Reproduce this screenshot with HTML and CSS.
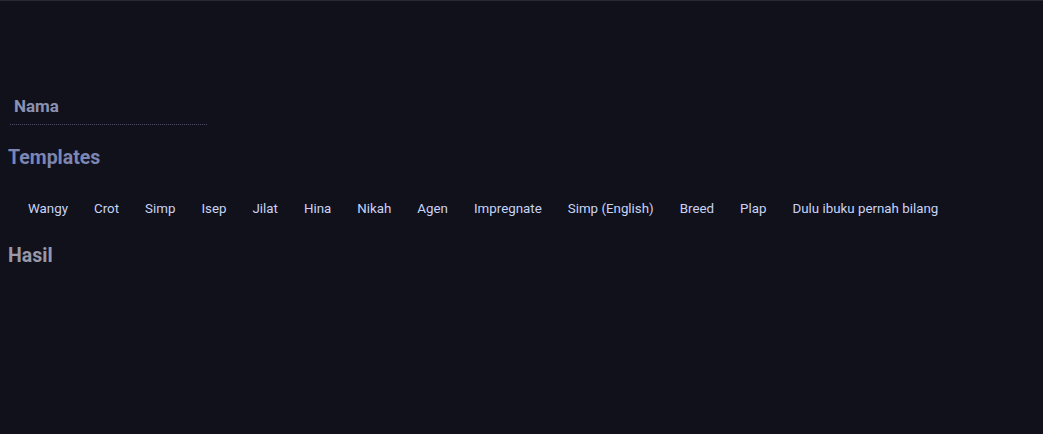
FILE: index.html
```html
<!DOCTYPE html>
<html>
<head>
<meta charset="utf-8">
<link rel="stylesheet" href="styles.css">
</head>
<body>
<main class="page">
  <div class="field">
    <input class="name-input" type="text" placeholder="Nama">
  </div>
  <h2 class="heading heading-templates">Templates</h2>
  <div class="templates">
    <button class="tpl">Wangy</button>
    <button class="tpl">Crot</button>
    <button class="tpl">Simp</button>
    <button class="tpl">Isep</button>
    <button class="tpl">Jilat</button>
    <button class="tpl">Hina</button>
    <button class="tpl">Nikah</button>
    <button class="tpl">Agen</button>
    <button class="tpl">Impregnate</button>
    <button class="tpl">Simp (English)</button>
    <button class="tpl">Breed</button>
    <button class="tpl">Plap</button>
    <button class="tpl">Dulu ibuku pernah bilang</button>
  </div>
  <h2 class="heading heading-result">Hasil</h2>
</main>
</body>
</html>
```

FILE: styles.css
```css
html, body {
  margin: 0;
  padding: 0;
  background: #11111b;
  height: 100%;
}
body {
  border-top: 1px solid #2a2a33;
  box-sizing: border-box;
  font-family: Roboto, "Liberation Sans", sans-serif;
}
.page {
  padding: 85px 8px 0 8px;
}
.field {
  padding-left: 2px;
}
.name-input {
  display: block;
  width: 197px;
  box-sizing: border-box;
  background: transparent;
  border: none;
  border-bottom: 1px dotted #4a4e66;
  padding: 10px 4px 8px 4px;
  font-family: Roboto, "Liberation Sans", sans-serif;
  font-size: 17px;
  line-height: 20px;
  font-weight: 700;
  color: #cdd6f4;
  outline: none;
}
.name-input::placeholder {
  color: #8a92b4;
  opacity: 1;
}
.heading {
  margin: 0;
  font-size: 19.5px;
  font-weight: 700;
  line-height: 24px;
}
.heading-templates {
  margin-top: 21px;
  color: #7c86b3;
}
.heading-result {
  margin-top: 19px;
  color: #9898a8;
}
.templates {
  display: flex;
  flex-wrap: wrap;
  padding: 23px 0 0 7px;
}
.tpl {
  background: transparent;
  border: none;
  padding: 8px 13px;
  font-family: Roboto, "Liberation Sans", sans-serif;
  font-size: 13.333px;
  line-height: 16px;
  color: #c8d4f6;
  cursor: pointer;
}
```
